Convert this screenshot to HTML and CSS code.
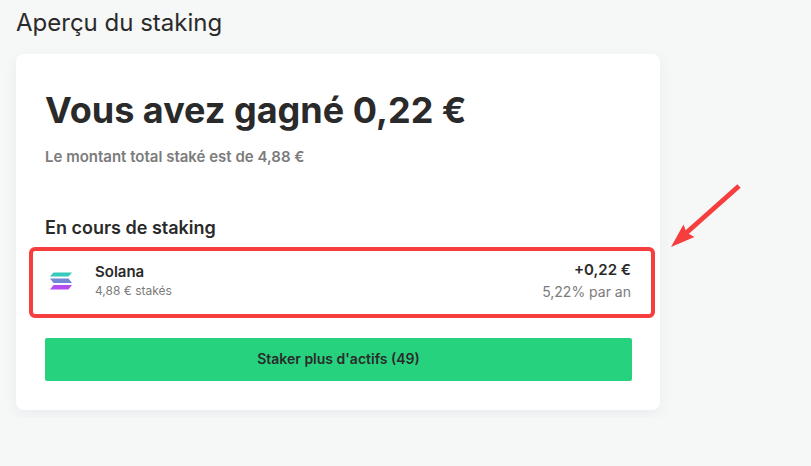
FILE: index.html
```html
<!DOCTYPE html>
<html lang="fr">
<head>
<meta charset="utf-8">
<meta name="viewport" content="width=device-width, initial-scale=1">
<title>Aperçu du staking</title>
<link rel="stylesheet" href="styles.css">
</head>
<body>
<main class="page">
  <h1 class="page-title">Aperçu du staking</h1>
  <section class="card">
    <h2 class="earned">Vous avez gagné 0,22 €</h2>
    <p class="total">Le montant total staké est de 4,88 €</p>
    <h3 class="section-title">En cours de staking</h3>
    <div class="asset">
      <svg class="asset-logo" viewBox="0 0 22 18" aria-hidden="true">
        <path d="M3.500 0.500H22L18.500 4.500H0Z" fill="#35cbb8"/>
        <path d="M0 6.500H18.500L22 11H3.500Z" fill="#7488d8"/>
        <path d="M3.500 13H22L18.500 17.500H0Z" fill="#b44cf0"/>
      </svg>
      <div class="asset-info">
        <span class="asset-name">Solana</span>
        <span class="asset-staked">4,88 € stakés</span>
      </div>
      <div class="asset-yield">
        <span class="asset-gain">+0,22 €</span>
        <span class="asset-rate">5,22% par an</span>
      </div>
      <svg class="arrow" viewBox="0 0 70 64" aria-hidden="true">
        <path d="M68 2L14 50" stroke="#f63e3e" stroke-width="5"/>
        <path d="M0 63L12.500 40.500L15.500 48.500L23.500 53Z" fill="#f63e3e"/>
      </svg>
    </div>
    <button class="stake-more" type="button">Staker plus d'actifs (49)</button>
  </section>
</main>
</body>
</html>
```

FILE: styles.css
```css
* {
  box-sizing: border-box;
}

body {
  margin: 0;
  background: #f6f7f7;
  color: #2a2a2a;
  font-family: Inter, "Liberation Sans", sans-serif;
}

h1, h2, h3, p {
  margin: 0;
}

.page {
  padding: 8px 16px;
  margin-right: 135px;
}

.page-title {
  font-size: 24px;
  line-height: 30px;
  font-weight: 400;
}

.card {
  margin-top: 16px;
  padding: 32px 28px 29px 29px;
  border-radius: 8px;
  background: #fff;
  box-shadow: 0 4px 16px rgba(20, 20, 50, 0.05);
}

.earned {
  font-size: 36px;
  line-height: 48px;
  font-weight: 700;
}

.total {
  margin-top: 13px;
  font-size: 15px;
  line-height: 20px;
  font-weight: 600;
  color: #7b7b7b;
}

.section-title {
  margin-top: 49px;
  font-size: 18px;
  line-height: 24px;
  font-weight: 600;
}

.asset {
  position: relative;
  display: flex;
  align-items: center;
  height: 71px;
  margin: 7px -23px 0 -16px;
  padding: 0 20px 4px 17px;
  border: 4px solid #f63e3e;
  border-radius: 6px;
}

.asset-logo {
  width: 22px;
  height: 18px;
}

.asset-info,
.asset-yield {
  display: flex;
  flex-direction: column;
}

.asset-info {
  margin-left: 23px;
}

.asset-yield {
  gap: 2px;
  margin-left: auto;
  align-items: flex-end;
}

.asset-name,
.asset-gain {
  font-size: 15px;
  line-height: 20px;
  font-weight: 600;
}

.asset-staked,
.asset-rate {
  font-size: 12px;
  line-height: 18px;
  color: #7b7b7b;
}

.asset-rate {
  font-size: 14px;
  line-height: 20px;
}

.arrow {
  position: absolute;
  left: 100%;
  bottom: 100%;
  width: 70px;
  height: 64px;
  margin: 0 0 3px 20px;
}

.stake-more {
  display: block;
  width: 100%;
  height: 43px;
  margin-top: 20px;
  padding: 0 0 1px;
  border: 0;
  border-radius: 2px;
  background: #27d27f;
  color: #2a2a2a;
  font: 600 14px/20px Inter, "Liberation Sans", sans-serif;
}
```
